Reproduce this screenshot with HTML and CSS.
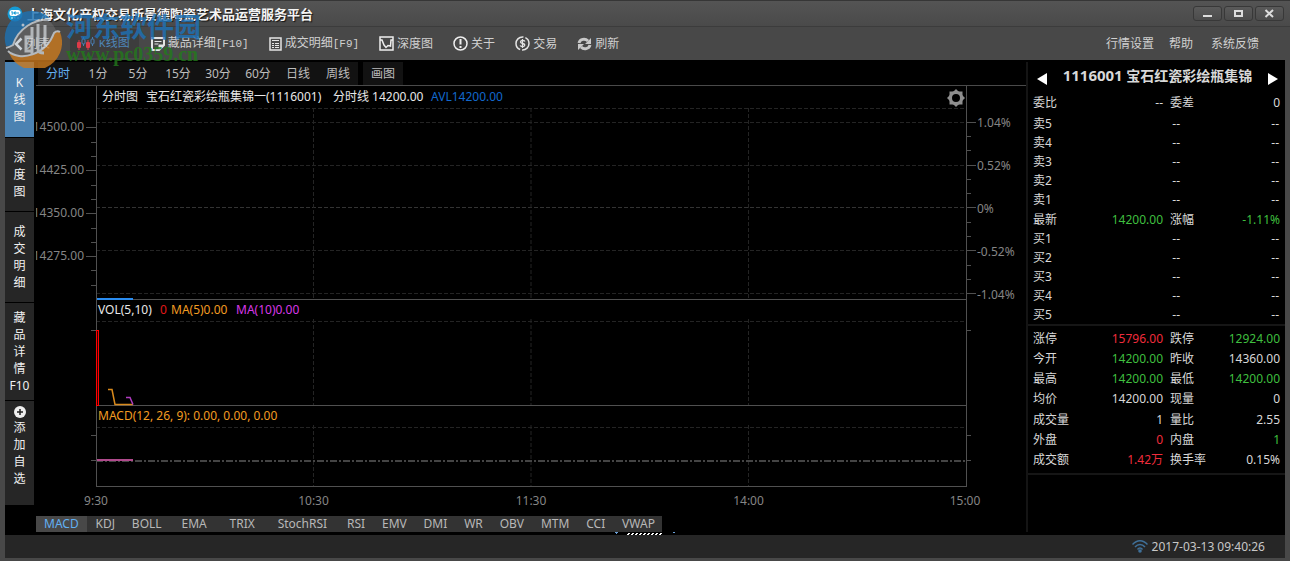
FILE: index.html
```html
<!DOCTYPE html>
<html lang="zh-CN">
<head>
<meta charset="utf-8">
<title>上海文化产权交易所景德陶瓷艺术品运营服务平台</title>
<link rel="stylesheet" href="styles.css">
</head>
<body>
<div class="window">
  <header class="titlebar">
    <svg class="app-logo" width="16" height="16" viewBox="0 0 16 16"><circle cx="8" cy="8" r="7.5" fill="#169bd5"/><rect x="2.500" y="4" width="11" height="6" rx="2.500" fill="#fff"/><path d="M4 6h2v2H4.500M7.500 6h1.500v2H7.500zM11 6v2" stroke="#169bd5" fill="none"/><path d="M4 12h8" stroke="#c8efff" stroke-dasharray="2 1"/></svg>
    <h1 class="title">上海文化产权交易所景德陶瓷艺术品运营服务平台</h1>
    <div class="win-buttons">
      <button class="win-btn" aria-label="最小化"><svg width="13" height="9"><path d="M2 7h9" stroke="#ddd" stroke-width="2"/></svg></button>
      <button class="win-btn" aria-label="最大化"><svg width="13" height="9"><rect x="3" y="2" width="7" height="5" fill="none" stroke="#ddd" stroke-width="2"/></svg></button>
      <button class="win-btn" aria-label="关闭"><svg width="13" height="9"><path d="M2.500 1l7.500 7M10 1L2.500 8" stroke="#ddd" stroke-width="2"/></svg></button>
    </div>
  </header>

  <nav class="toolbar">
    <button class="tool tool-back"><svg width="9" height="14"><path d="M7.500 1.500L2 7l5.500 5.500" fill="none" stroke="#e4eef6" stroke-width="2.500"/></svg>列表</button>
    <button class="tool tool-active"><svg width="20" height="14"><path d="M3 3v10M12 3v10" stroke="#e03a48"/><rect x="1" y="5" width="4" height="6" rx="1" fill="#e03a48"/><rect x="10" y="5" width="4" height="6" rx="1" fill="#e03a48"/><path d="M7.500 0v9M16.500 0v9" stroke="#4a7fb4"/><rect x="6" y="2" width="3" height="5" rx="1" fill="#3b3b3b" stroke="#4a7fb4"/><rect x="15" y="2" width="3" height="5" rx="1" fill="#3b3b3b" stroke="#4a7fb4"/></svg><span><span class="mono">K</span>线图</span></button>
    <button class="tool tool-detail"><svg width="14" height="14"><path d="M1 1h12v7l-5 5H1z" fill="none" stroke="#e4e4e4" stroke-width="2"/><path d="M13 8H8v5zM3.500 4.500h7M3.500 7h4" fill="#e4e4e4" stroke="#e4e4e4"/></svg><span>藏品详细<span class="mono">[F10]</span></span></button>
    <button class="tool"><svg width="13" height="14"><rect x="1" y="1" width="11" height="12" fill="none" stroke="#e4e4e4" stroke-width="1.500"/><path d="M3 3.500h7M3 6.500h2M6 6.500h4M3 8.500h2M6 8.500h4M3 10.500h2M6 10.500h4" stroke="#e4e4e4"/></svg><span>成交明细<span class="mono">[F9]</span></span></button>
    <button class="tool"><svg width="15" height="15"><rect x="1" y="1" width="13" height="13" fill="none" stroke="#eee" stroke-width="1.500"/><path d="M1 4h2l2 5 2 2.500L9 9.500 11.500 10 12 4h2" fill="none" stroke="#eee" stroke-width="1.500"/></svg>深度图</button>
    <button class="tool"><svg width="15" height="15"><circle cx="7.500" cy="7.500" r="6.500" fill="none" stroke="#eee" stroke-width="1.500"/><path d="M7.500 3v5.500M7.500 10v2" stroke="#eee" stroke-width="2"/></svg>关于</button>
    <button class="tool"><svg width="15" height="15"><circle cx="7.500" cy="7.500" r="6.500" fill="none" stroke="#e4e4e4" stroke-width="1.500" stroke-dasharray="18.420 2" stroke-dashoffset="8"/><path d="M10 5.500C9 4 5.500 4 5.500 6S9.800 7 9.800 9 6 11 5 9.500M7.500 3v9" fill="none" stroke="#e4e4e4" stroke-width="1.300"/></svg>交易</button>
    <button class="tool"><svg width="15" height="14"><path d="M2 6C3 2 8 1 11 4M13 8c-1 4-6 5-9 2" fill="none" stroke="#c9c9c9" stroke-width="3"/><path d="M14 1v6H8zM1 13V7h6z" fill="#c9c9c9"/></svg>刷新</button>
    <div class="tool-links">
      <button class="tool">行情设置</button>
      <button class="tool">帮助</button>
      <button class="tool link-feedback">系统反馈</button>
    </div>
  </nav>

  <main class="workspace">
    <aside class="sidebar">
      <button class="side side-active">K<br>线<br>图</button>
      <button class="side">深<br>度<br>图</button>
      <button class="side side-trades">成<br>交<br>明<br>细</button>
      <button class="side side-info">藏<br>品<br>详<br>情<br>F10</button>
      <button class="side side-add"><svg width="12" height="12"><circle cx="6" cy="6" r="6" fill="#eee"/><path d="M6 3v6M3 6h6" stroke="#222" stroke-width="1.500"/></svg>添<br>加<br>自<br>选</button>
    </aside>

    <section class="chart-panel">
      <div class="period-row">
        <div class="periods">
          <button class="period selected">分时</button><button class="period">1分</button><button class="period">5分</button><button class="period">15分</button><button class="period">30分</button><button class="period">60分</button><button class="period">日线</button><button class="period">周线</button>
        </div>
        <button class="period draw">画图</button>
      </div>

      <div class="chart">
        <svg class="axis axis-left">
          <path class="line" d="M50 41.500h10M50 84.500h10M50 127.500h10M50 170.500h10M55 56.500h5M55 70.500h5M55 99.500h5M55 113.500h5M55 142.500h5M55 156.500h5M55 184.500h5M55 199.500h5M55 244.500h5M55 349.500h5M55 374.500h5"/>
          <g class="axis-text" text-anchor="end"><text x="48" y="45">14500.00</text><text x="48" y="88">14425.00</text><text x="48" y="131">14350.00</text><text x="48" y="174">14275.00</text></g>
        </svg>
        <svg class="plot">
          <g class="dashes">
            <line x2="100%" y1="22.500" y2="22.500"/><line x2="100%" y1="36.500" y2="36.500"/><line x2="100%" y1="79.500" y2="79.500"/><line class="zero" x2="100%" y1="121.500" y2="121.500"/><line x2="100%" y1="164.500" y2="164.500"/><line x2="100%" y1="207.500" y2="207.500"/><line x2="100%" y1="235.500" y2="235.500"/><line x2="100%" y1="341.500" y2="341.500"/>
            <line x1="25%" x2="25%" y1="22" y2="213"/><line x1="50%" x2="50%" y1="22" y2="213"/><line x1="75%" x2="75%" y1="22" y2="213"/>
            <line x1="25%" x2="25%" y1="233" y2="319"/><line x1="50%" x2="50%" y1="233" y2="319"/><line x1="75%" x2="75%" y1="233" y2="319"/>
            <line x1="25%" x2="25%" y1="339" y2="400"/><line x1="50%" x2="50%" y1="339" y2="400"/><line x1="75%" x2="75%" y1="339" y2="400"/>
          </g>
          <g class="line"><path d="M.5 0v401"/><line x2="100%" y1="213.500" y2="213.500"/><line x2="100%" y1="319.500" y2="319.500"/><line x2="100%" y1="400.500" y2="400.500"/></g>
          <line x2="100%" y1="375" y2="375" stroke="#444" stroke-width="2" stroke-dasharray="7 2 2 2"/>
          <path d="M1 213h36" stroke="#2a8cf0" stroke-width="2"/>
          <rect x="0.500" y="244.500" width="2" height="75" fill="#300" stroke="#f00"/>
          <path d="M12 303.500h4l3 15h18" fill="none" stroke="#d98a1c" stroke-width="1.500"/>
          <path d="M30 311.500h4l3 7" fill="none" stroke="#b03cc0" stroke-width="1.500"/>
          <path d="M1 374h36" stroke="#b04a8c" stroke-width="2"/>
          <text class="legend" y="15"><tspan x="6">分时图</tspan><tspan x="50">宝石红瓷彩绘瓶集锦一(1116001)</tspan><tspan x="237">分时线 14200.00</tspan><tspan x="335" class="avl">AVL14200.00</tspan></text>
          <text class="legend" y="228"><tspan x="2">VOL(5,10)</tspan><tspan x="64" class="red">0</tspan><tspan x="75" class="orange">MA(5)0.00</tspan><tspan x="140" class="magenta">MA(10)0.00</tspan></text>
          <text class="legend orange" x="2" y="334">MACD(12, 26, 9): 0.00, 0.00, 0.00</text>
          <g class="axis-text" text-anchor="middle"><text x="0" y="419">9:30</text><text x="25%" y="419">10:30</text><text x="50%" y="419">11:30</text><text x="75%" y="419">14:00</text></g>
        </svg>
        <svg class="axis axis-right">
          <path class="line" d="M.5 0v401M0 36.500h10M0 79.500h10M0 121.500h10M0 164.500h10M0 207.500h10M0 50.500h5M0 64.500h5M0 93.500h5M0 107.500h5M0 136.500h5M0 150.500h5M0 179.500h5M0 193.500h5M0 244.500h5M0 349.500h5M0 374.500h5"/>
          <g class="axis-text"><text x="11" y="41">1.04%</text><text x="11" y="84">0.52%</text><text x="11" y="127">0%</text><text x="11" y="170">-0.52%</text><text x="11" y="213">-1.04%</text></g>
          <text class="axis-text" x="-1" y="419" text-anchor="middle">15:00</text>
        </svg>
        <button class="gear" aria-label="设置"><svg width="18" height="18" viewBox="-9 -9 18 18"><path fill="#8e8e8e" fill-rule="evenodd" d="M-2-7L0-9 2-7 3.500-6.500 6.500-6.500 6.500-3.500 7-2 9 0 7 2 6.500 3.500 6.500 6.500 3.500 6.500 2 7 0 9-2 7-3.500 6.500-6.500 6.500-6.500 3.500-7 2-9 0-7-2-6.500-3.500-6.500-6.500-3.500-6.500zM-4 0a4 4 0 1 0 8 0a4 4 0 1 0-8 0z"/></svg></button>
      </div>

      <div class="indicators">
        <button class="ind selected">MACD</button><button class="ind">KDJ</button><button class="ind">BOLL</button><button class="ind ind-wide">EMA</button><button class="ind ind-wide">TRIX</button><button class="ind ind-wide">StochRSI</button><button class="ind">RSI</button><button class="ind">EMV</button><button class="ind">DMI</button><button class="ind">WR</button><button class="ind">OBV</button><button class="ind">MTM</button><button class="ind">CCI</button><button class="ind">VWAP</button>
      </div>
    </section>

    <aside class="quote">
      <div class="quote-head">
        <button class="arrow" aria-label="上一个"><svg width="10" height="12"><path d="M10 0v12L0 6z" fill="#fff"/></svg></button>
        <h2 class="quote-name"><span class="code">1116001</span> 宝石红瓷彩绘瓶集锦</h2>
        <button class="arrow" aria-label="下一个"><svg width="10" height="12"><path d="M0 0v12l10-6z" fill="#fff"/></svg></button>
      </div>
      <table class="pairs ratio"><tr><th>委比</th><td>--</td><th>委差</th><td>0</td></tr></table>
      <table class="ladder">
        <tr><th>卖5</th><td>--</td><td>--</td></tr><tr><th>卖4</th><td>--</td><td>--</td></tr><tr><th>卖3</th><td>--</td><td>--</td></tr><tr><th>卖2</th><td>--</td><td>--</td></tr><tr><th>卖1</th><td>--</td><td>--</td></tr>
      </table>
      <table class="pairs latest"><tr><th>最新</th><td class="down">14200.00</td><th>涨幅</th><td class="down">-1.11%</td></tr></table>
      <table class="ladder">
        <tr><th>买1</th><td>--</td><td>--</td></tr><tr><th>买2</th><td>--</td><td>--</td></tr><tr><th>买3</th><td>--</td><td>--</td></tr><tr><th>买4</th><td>--</td><td>--</td></tr><tr><th>买5</th><td>--</td><td>--</td></tr>
      </table>
      <table class="pairs stats">
        <tr><th>涨停</th><td class="up">15796.00</td><th>跌停</th><td class="down">12924.00</td></tr>
        <tr><th>今开</th><td class="down">14200.00</td><th>昨收</th><td>14360.00</td></tr>
        <tr><th>最高</th><td class="down">14200.00</td><th>最低</th><td class="down">14200.00</td></tr>
        <tr><th>均价</th><td>14200.00</td><th>现量</th><td>0</td></tr>
        <tr><th>成交量</th><td>1</td><th>量比</th><td>2.55</td></tr>
        <tr><th>外盘</th><td class="up">0</td><th>内盘</th><td class="down">1</td></tr>
        <tr><th>成交额</th><td class="up">1.42万</td><th>换手率</th><td>0.15%</td></tr>
      </table>
    </aside>
  </main>

  <div class="grip"><svg width="60" height="3"><path d="M0 .5h3M58 .5h2M1 1.500h1" stroke="#6aa0d8"/><path d="M13 1.500h34M12 2.500h34" stroke="#fff" stroke-dasharray="2 2"/></svg></div>
  <footer class="status">
    <svg width="16" height="13" viewBox="0 0 16 13"><g fill="none" stroke="#3f7099" stroke-width="1.500"><path d="M.5 4.500C5-.5 11-.5 15.500 4.500M3 7c3-3.500 7-3.500 10 0M5.500 9.500c1.500-2 3.500-2 5 0"/></g><circle cx="8" cy="11" r="1.800" fill="#3f7099"/></svg>
    <time>2017-03-13 09:40:26</time>
  </footer>

  <div class="watermark">
    <svg width="58" height="58" viewBox="0 0 58 58">
      <circle cx="29" cy="30" r="25" fill="#999" opacity=".35"/>
      <path d="M2 36A27 27 0 0 1 46 8A38 38 0 0 0 9 35Q6 36 2 36z" fill="#1d72b4"/>
      <path d="M56 22A27 27 0 0 1 5 43A34 34 0 0 0 50 22z" fill="#cc7a1e"/>
      <path d="M2 38A25 25 0 0 0 9 35A36 36 0 0 1 47 10" fill="none" stroke="#cfd6dc" stroke-width="2"/>
      <path d="M4 41C16 52 42 45 50 23Q53 20 56 22" fill="none" stroke="#cfd6dc" stroke-width="2"/>
      <path d="M28 17v27M34 14v25q0 4 6 4M41 15v22M28 27h-6v14h6" fill="none" stroke="#cdd2d6" stroke-width="3"/>
      <circle cx="19" cy="15" r="1.500" fill="#ccdcec"/>
    </svg>
    <div class="mark-text"><div class="mark-name">河东软件园</div><div class="mark-url">www.pc0359.cn</div></div>
  </div>
</div>
</body>
</html>
```

FILE: styles.css
```css
* { box-sizing: border-box; }

body {
  margin: 0;
  background: #484848;
  color: #d8d8d8;
  font: 12px/16px "Noto Sans", "Noto Sans CJK SC", sans-serif;
}

button {
  margin: 0;
  padding: 0;
  border: 0;
  background: none;
  color: inherit;
  font: inherit;
  white-space: nowrap;
}

svg { display: block; flex: none; }

.window {
  position: relative;
  display: flex;
  flex-direction: column;
  min-height: 100vh;
  padding: 0 5px 3px;
  border-top: 1px solid #363636;
  border-bottom: 1px solid #363636;
  background: #484848;
}

/* Title bar */
.titlebar {
  display: flex;
  align-items: center;
  height: 26px;
  margin: 0 -5px;
  padding: 0 6px 0 7px;
  border-bottom: 1px solid #3c3c3c;
  background: linear-gradient(#545454, #4a4a4a);
}
.title {
  flex: 1;
  margin: 0 0 0 4px;
  color: #f4f4f4;
  font-size: 13px;
  line-height: 18px;
  text-shadow: 1px 1px 1px #111;
}
.win-buttons { display: flex; gap: 2px; }
.win-btn {
  display: grid;
  place-items: center;
  width: 29px;
  height: 15px;
  border: 1px solid #383838;
  border-radius: 3px;
  background: linear-gradient(#5a5a5a, #4c4c4c);
}

/* Toolbar */
.toolbar {
  display: flex;
  align-items: center;
  gap: 20px;
  height: 33px;
  padding-left: 9px;
  color: #d0d0d0;
}
.tool { display: flex; align-items: center; gap: 3px; }
.tool-active {
  height: 29px;
  padding: 0 9px 0 6px;
  background: #3d3d3d;
  color: #4f86b8;
}
.tool-detail { margin-left: -8px; }
.mono { font: 11px/16px "Liberation Mono", monospace; }
.tool-links {
  display: flex;
  gap: 15px;
  margin-left: auto;
  padding-right: 26px;
}
.link-feedback { margin-left: 3px; }

/* Workspace */
.workspace {
  display: flex;
  flex: 1;
  padding-top: 2px;
  background: #000;
}
.sidebar {
  display: flex;
  flex-direction: column;
  gap: 1px;
  width: 29px;
  margin-right: 2px;
}
.side {
  height: 73px;
  background: #262626;
  color: #f0f0f0;
  line-height: 17px;
}
.side-active { height: 75px; background: #4b82b2; }
.side-trades { height: 90px; }
.side-info { height: 97px; }
.side-add { height: 104px; padding-bottom: 14px; }
.side-add svg { margin: 0 auto 1px; }

.chart-panel {
  display: flex;
  flex: 1;
  flex-direction: column;
  min-width: 0;
}
.period-row { display: flex; gap: 5px; padding-left: 2px; }
.periods { display: flex; background: #121212; }
.period { width: 40px; height: 23px; color: #bdbdbd; }
.draw { background: #121212; }
.selected { color: #62b0f2; }

.chart {
  position: relative;
  display: flex;
  height: 431px;
  border-top: 1px solid #4a4a4a;
}
.axis { width: 60px; height: 429px; }
.axis-left { overflow: hidden; }
.axis-right { overflow: visible; }
.plot { flex: 1; min-width: 0; height: 429px; overflow: visible; }
.gear { position: absolute; top: 3px; right: 61px; }

.line { fill: none; stroke: #505050; }
.dashes { stroke: #242424; stroke-dasharray: 4 2; }
.zero { stroke: #333; }
.axis-text { fill: #858585; }
.legend { fill: #e8e8e8; }
.avl { fill: #1268cc; }
.red { fill: #e01818; }
.orange { fill: #f29c22; }
.magenta { fill: #d838e8; }

.indicators {
  display: flex;
  justify-content: space-between;
  width: 626px;
  height: 16px;
  padding-right: 7px;
  background: #333;
  color: #b8b8b8;
}
.ind { line-height: 16px; }
.ind-wide { padding: 0 3px; }
.ind.selected { padding: 0 8px; margin-right: -8px; background: #484848; }

/* Quote panel */
.quote {
  width: 259px;
  border-left: 2px solid #141414;
}
.quote-head {
  display: flex;
  align-items: center;
  justify-content: space-between;
  height: 29px;
  padding: 0 7px 0 9px;
}
.arrow { padding-top: 4px; }
.quote-name { margin: 0; padding-bottom: 2px; font-size: 14px; line-height: 20px; }
.code { font-size: 15px; }

table {
  width: 100%;
  border-collapse: collapse;
  table-layout: fixed;
}
th, td { padding: 0; line-height: 16px; font-weight: normal; }
th { padding-left: 5px; text-align: left; }
td { text-align: right; }
.ladder { height: 94px; }
.ladder td { padding-right: 6px; }
.ladder th { width: 100px; }
.ladder td:nth-child(2) { width: 58px; }
.pairs th { width: 51px; }
.pairs td { width: 84px; }
.pairs th:nth-child(3) { width: 55px; padding-left: 7px; }
.pairs td:nth-child(4) { width: auto; padding-right: 5px; }
.ratio { height: 24px; }
.latest { height: 21px; }
.stats {
  height: 151px;
  border-top: 2px solid #161616;
  border-bottom: 2px solid #161616;
  border-collapse: separate;
  border-spacing: 0;
  padding: 3px 0;
}
.up { color: #f02c3c; }
.down { color: #3fbf3f; }

/* Status bar */
.grip { display: flex; justify-content: center; height: 3px; background: #000; }
.status {
  display: flex;
  align-items: center;
  justify-content: flex-end;
  gap: 4px;
  height: 23px;
  padding-right: 20px;
  background: #262626;
  color: #c8c8c8;
}

/* Site mark laid over the top-left corner */
.watermark {
  position: absolute;
  top: 9px;
  left: 4px;
  display: flex;
  gap: 4px;
  opacity: .8;
  pointer-events: none;
}
.mark-name {
  color: #1d72b8;
  font: bold 27px/32px "Noto Sans CJK SC", sans-serif;
}
.mark-url {
  color: #237a1c;
  font: bold 20px/24px "Liberation Serif", serif;
}
```
